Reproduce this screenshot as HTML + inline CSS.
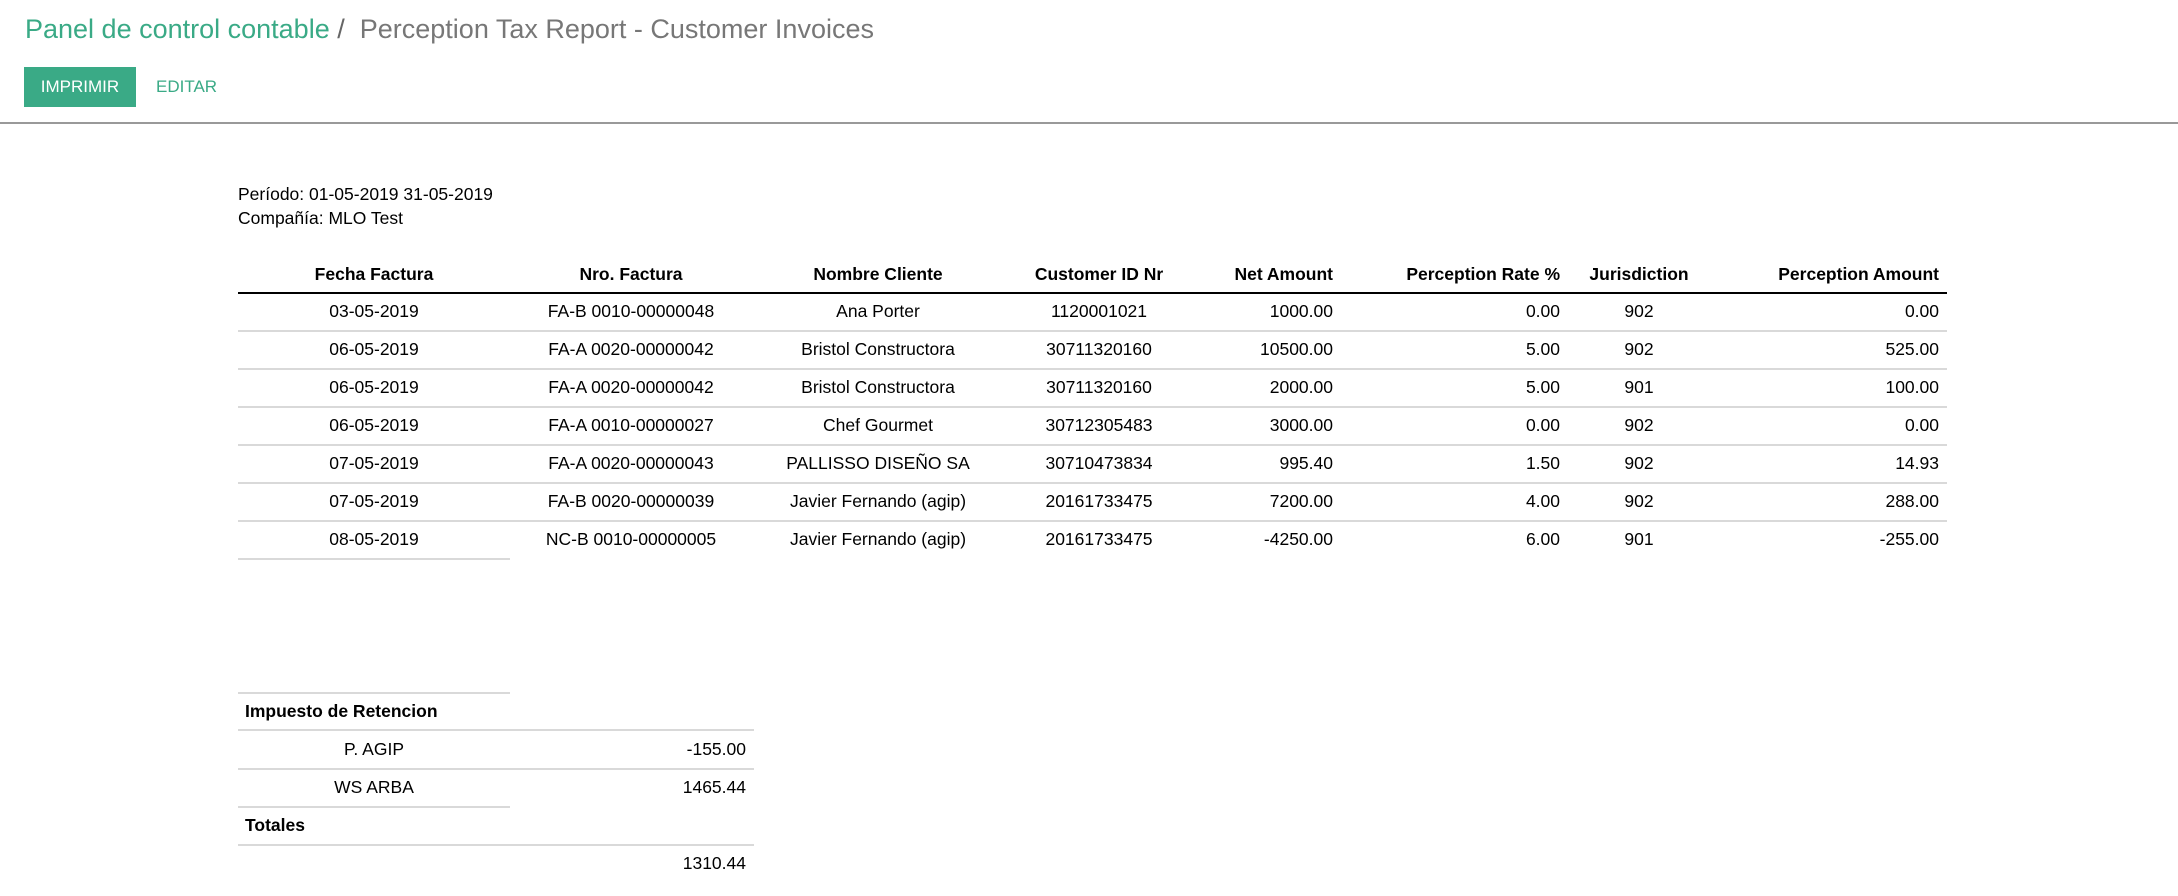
<!DOCTYPE html>
<html><head><meta charset="utf-8"><style>
*{margin:0;padding:0;box-sizing:border-box}
body{width:2178px;height:896px;background:#fff;font-family:"Liberation Sans",Arial,sans-serif;color:#000;position:relative;overflow:hidden}
.a{position:absolute;white-space:nowrap}
.t{font-size:27px;top:14px}
.btn{position:absolute;left:24px;top:67px;width:112px;height:40px;background:#3aaa86;color:#fff;font-size:17px;line-height:40px;text-align:center}
.hr{position:absolute;left:0;top:122px;width:2178px;height:2px;background:#999}
.row{position:absolute;left:238px;width:1709px;height:38px;font-size:17.5px;line-height:38px;display:flex}
.row div{padding:0 8px;overflow:hidden}
.c1{width:272px;text-align:center}.c2{width:242px;text-align:center}.c3{width:252px;text-align:center}.c4{width:190px;text-align:center}
.c5{width:147px;text-align:right}.c6{width:227px;text-align:right}.c7{width:142px;text-align:center}.c8{width:237px;text-align:right}
.hd{font-weight:bold;border-bottom:2px solid #000}
.line{position:absolute;left:238px;height:2px;background:#d9d9d9}
.s{position:absolute;font-size:17.5px;line-height:38px;height:38px}
</style></head><body>
<div class="a t" style="left:25px;color:#3aaa86">Panel de control contable <span style="color:#666">/</span>&nbsp; <span style="color:#777">Perception Tax Report - Customer Invoices</span></div>
<div class="btn">IMPRIMIR</div>
<div class="a" style="left:156px;top:77px;font-size:17px;color:#3aaa86">EDITAR</div>
<div class="hr"></div>
<div class="a" style="left:238px;top:184px;font-size:17.5px">Período: 01-05-2019 31-05-2019</div>
<div class="a" style="left:238px;top:208px;font-size:17.5px">Compañía: MLO Test</div>

<div class="row hd" style="top:255px;height:39px"><div class="c1">Fecha Factura</div><div class="c2">Nro. Factura</div><div class="c3">Nombre Cliente</div><div class="c4">Customer ID Nr</div><div class="c5">Net Amount</div><div class="c6">Perception Rate %</div><div class="c7">Jurisdiction</div><div class="c8">Perception Amount</div></div>

<div class="row" style="top:292px"><div class="c1">03-05-2019</div><div class="c2">FA-B 0010-00000048</div><div class="c3">Ana Porter</div><div class="c4">1120001021</div><div class="c5">1000.00</div><div class="c6">0.00</div><div class="c7">902</div><div class="c8">0.00</div></div>
<div class="line" style="top:330px;width:1709px"></div>
<div class="row" style="top:330px"><div class="c1">06-05-2019</div><div class="c2">FA-A 0020-00000042</div><div class="c3">Bristol Constructora</div><div class="c4">30711320160</div><div class="c5">10500.00</div><div class="c6">5.00</div><div class="c7">902</div><div class="c8">525.00</div></div>
<div class="line" style="top:368px;width:1709px"></div>
<div class="row" style="top:368px"><div class="c1">06-05-2019</div><div class="c2">FA-A 0020-00000042</div><div class="c3">Bristol Constructora</div><div class="c4">30711320160</div><div class="c5">2000.00</div><div class="c6">5.00</div><div class="c7">901</div><div class="c8">100.00</div></div>
<div class="line" style="top:406px;width:1709px"></div>
<div class="row" style="top:406px"><div class="c1">06-05-2019</div><div class="c2">FA-A 0010-00000027</div><div class="c3">Chef Gourmet</div><div class="c4">30712305483</div><div class="c5">3000.00</div><div class="c6">0.00</div><div class="c7">902</div><div class="c8">0.00</div></div>
<div class="line" style="top:444px;width:1709px"></div>
<div class="row" style="top:444px"><div class="c1">07-05-2019</div><div class="c2">FA-A 0020-00000043</div><div class="c3">PALLISSO DISEÑO SA</div><div class="c4">30710473834</div><div class="c5">995.40</div><div class="c6">1.50</div><div class="c7">902</div><div class="c8">14.93</div></div>
<div class="line" style="top:482px;width:1709px"></div>
<div class="row" style="top:482px"><div class="c1">07-05-2019</div><div class="c2">FA-B 0020-00000039</div><div class="c3">Javier Fernando (agip)</div><div class="c4">20161733475</div><div class="c5">7200.00</div><div class="c6">4.00</div><div class="c7">902</div><div class="c8">288.00</div></div>
<div class="line" style="top:520px;width:1709px"></div>
<div class="row" style="top:520px"><div class="c1">08-05-2019</div><div class="c2">NC-B 0010-00000005</div><div class="c3">Javier Fernando (agip)</div><div class="c4">20161733475</div><div class="c5">-4250.00</div><div class="c6">6.00</div><div class="c7">901</div><div class="c8">-255.00</div></div>
<div class="line" style="top:558px;width:272px"></div>

<div class="line" style="top:692px;width:272px"></div>
<div class="s" style="left:245px;top:692px;font-weight:bold">Impuesto de Retencion</div>
<div class="line" style="top:729px;width:516px"></div>
<div class="s" style="left:238px;width:272px;text-align:center;top:730px">P. AGIP</div>
<div class="s" style="left:510px;width:236px;text-align:right;top:730px">-155.00</div>
<div class="line" style="top:768px;width:516px"></div>
<div class="s" style="left:238px;width:272px;text-align:center;top:768px">WS ARBA</div>
<div class="s" style="left:510px;width:236px;text-align:right;top:768px">1465.44</div>
<div class="line" style="top:806px;width:272px"></div>
<div class="s" style="left:245px;top:806px;font-weight:bold">Totales</div>
<div class="line" style="top:844px;width:516px"></div>
<div class="s" style="left:510px;width:236px;text-align:right;top:844px">1310.44</div>
</body></html>
